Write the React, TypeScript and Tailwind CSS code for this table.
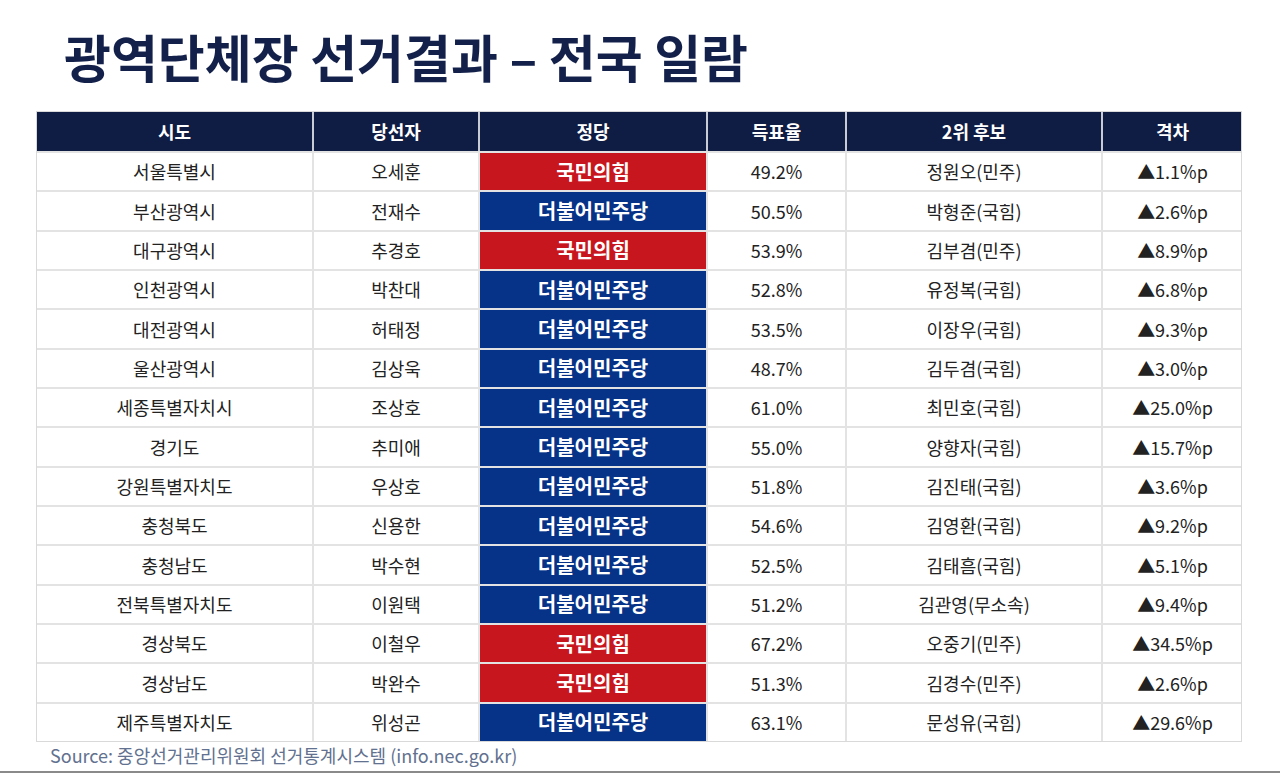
const rows: [string, string, "ppp" | "dem", string, string, string][] = [
  ["서울특별시", "오세훈", "ppp", "49.2%", "정원오(민주)", "▲1.1%p"],
  ["부산광역시", "전재수", "dem", "50.5%", "박형준(국힘)", "▲2.6%p"],
  ["대구광역시", "추경호", "ppp", "53.9%", "김부겸(민주)", "▲8.9%p"],
  ["인천광역시", "박찬대", "dem", "52.8%", "유정복(국힘)", "▲6.8%p"],
  ["대전광역시", "허태정", "dem", "53.5%", "이장우(국힘)", "▲9.3%p"],
  ["울산광역시", "김상욱", "dem", "48.7%", "김두겸(국힘)", "▲3.0%p"],
  ["세종특별자치시", "조상호", "dem", "61.0%", "최민호(국힘)", "▲25.0%p"],
  ["경기도", "추미애", "dem", "55.0%", "양향자(국힘)", "▲15.7%p"],
  ["강원특별자치도", "우상호", "dem", "51.8%", "김진태(국힘)", "▲3.6%p"],
  ["충청북도", "신용한", "dem", "54.6%", "김영환(국힘)", "▲9.2%p"],
  ["충청남도", "박수현", "dem", "52.5%", "김태흠(국힘)", "▲5.1%p"],
  ["전북특별자치도", "이원택", "dem", "51.2%", "김관영(무소속)", "▲9.4%p"],
  ["경상북도", "이철우", "ppp", "67.2%", "오중기(민주)", "▲34.5%p"],
  ["경상남도", "박완수", "ppp", "51.3%", "김경수(민주)", "▲2.6%p"],
  ["제주특별자치도", "위성곤", "dem", "63.1%", "문성유(국힘)", "▲29.6%p"],
];

const headers = ["시도", "당선자", "정당", "득표율", "2위 후보", "격차"];
const cols = "grid-cols-[277px_166px_228px_139px_256px_139px]";

export default function App() {
  return (
    <div
      className="w-[1280px] h-[774px] bg-white flex flex-col overflow-hidden"
      style={{ fontFamily: '"Noto Sans CJK KR", "Noto Sans", sans-serif' }}
    >
      <h1 className="pl-[64px] pt-[24px] h-[111px] text-[51px] font-bold text-[#13204a] leading-[64px]">
        광역단체장 선거결과 – 전국 일람
      </h1>
      <div className="ml-[36px] w-[1206px] border border-[#d9d9d9]">
        <div className={`grid ${cols} h-[39px] bg-[#0f1c43] text-white text-[18px] font-bold`}>
          {headers.map((h, i) => (
            <div
              key={h}
              className={`flex items-center justify-center ${i < 5 ? "border-r-2 border-[#c9ccd4]" : ""}`}
            >
              {h}
            </div>
          ))}
        </div>
        {rows.map((r) => (
          <div
            key={r[0]}
            className={`grid ${cols} h-[39.35px] border-t-2 border-[#e3e3e3] text-[18px] text-[#222222]`}
          >
            <div className="flex items-center justify-center border-r-2 border-[#e3e3e3]">{r[0]}</div>
            <div className="flex items-center justify-center border-r-2 border-[#e3e3e3]">{r[1]}</div>
            <div
              className={`flex items-center justify-center border-r-2 border-[#e3e3e3] text-[20px] font-bold text-white ${
                r[2] === "ppp" ? "bg-[#c8161e]" : "bg-[#063287]"
              }`}
            >
              {r[2] === "ppp" ? "국민의힘" : "더불어민주당"}
            </div>
            <div className="flex items-center justify-center border-r-2 border-[#e3e3e3]">{r[3]}</div>
            <div className="flex items-center justify-center border-r-2 border-[#e3e3e3]">{r[4]}</div>
            <div className="flex items-center justify-center">{r[5]}</div>
          </div>
        ))}
      </div>
      <p className="pl-[50px] pt-[1px] text-[18px] text-[#62718f] leading-[24px]">
        Source: 중앙선거관리위원회 선거통계시스템 (info.nec.go.kr)
      </p>
      <div className="mt-auto h-[2px] bg-[#8a8a8a] mb-[1px]" />
    </div>
  );
}
